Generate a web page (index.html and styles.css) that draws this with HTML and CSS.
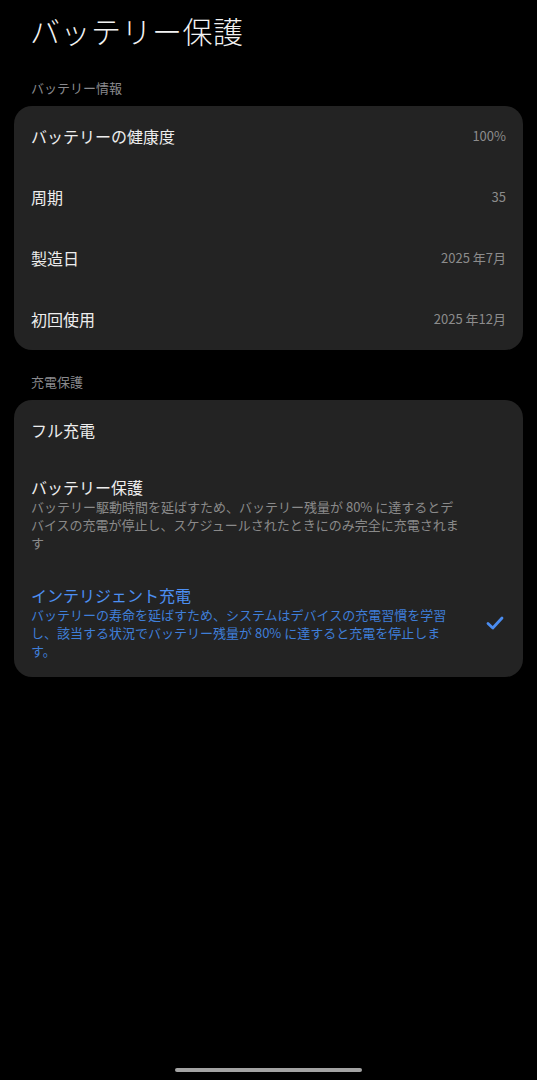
FILE: index.html
```html
<!DOCTYPE html>
<html lang="ja">
<head>
<meta charset="utf-8">
<title>バッテリー保護</title>
<link rel="stylesheet" href="styles.css">
</head>
<body>
<div class="screen">
  <h1 class="title">バッテリー保護</h1>

  <div class="section-label">バッテリー情報</div>
  <div class="card">
    <div class="row"><span class="row-label">バッテリーの健康度</span><span class="row-value">100%</span></div>
    <div class="row"><span class="row-label">周期</span><span class="row-value">35</span></div>
    <div class="row"><span class="row-label">製造日</span><span class="row-value">2025 年7月</span></div>
    <div class="row"><span class="row-label">初回使用</span><span class="row-value">2025 年12月</span></div>
  </div>

  <div class="section-label second">充電保護</div>
  <div class="card">
    <div class="row"><span class="row-label">フル充電</span></div>
    <div class="option">
      <div class="option-text wide">
        <div class="option-title">バッテリー保護</div>
        <div class="option-desc">バッテリー駆動時間を延ばすため、バッテリー残量が 80% に達するとデバイスの充電が停止し、スケジュールされたときにのみ完全に充電されます</div>
      </div>
    </div>
    <div class="option selected">
      <div class="option-text narrow">
        <div class="option-title">インテリジェント充電</div>
        <div class="option-desc">バッテリーの寿命を延ばすため、システムはデバイスの充電習慣を学習し、該当する状況でバッテリー残量が 80% に達すると充電を停止します。</div>
      </div>
      <svg class="check" width="18" height="16" viewBox="0 0 18 16" aria-hidden="true">
        <path d="M2 8.5 L6.8 13 L16 3" fill="none" stroke="#4a8cf0" stroke-width="2.8" stroke-linecap="round" stroke-linejoin="round"/>
      </svg>
    </div>
  </div>

  <div class="spacer"></div>
  <div class="home-indicator"></div>
</div>
</body>
</html>
```
FILE: styles.css
```css
* { box-sizing: border-box; }
html, body {
  margin: 0;
  padding: 0;
  background: #000;
}
body {
  font-family: "Noto Sans CJK JP", "Noto Sans", sans-serif;
  color: #ececec;
}
.screen {
  width: 537px;
  height: 1080px;
  display: flex;
  flex-direction: column;
  padding: 0 14px;
}
.title {
  margin: 0;
  padding: 10px 0 0 16px;
  height: 74px;
  font-size: 30px;
  font-weight: 300;
  line-height: 40px;
  color: #f2f2f2;
  letter-spacing: 0.5px;
}
.section-label {
  font-size: 13px;
  line-height: 18px;
  color: #8a8a8e;
  padding-left: 17px;
  height: 32px;
  padding-top: 5px;
}
.section-label.second {
  margin-top: 17px;
  height: 33px;
  padding-top: 6px;
}
.card {
  background: #232323;
  border-radius: 18px;
  display: flex;
  flex-direction: column;
}
.row {
  height: 61px;
  display: flex;
  align-items: center;
  justify-content: space-between;
  padding: 0 17px 2px;
}
.row-label {
  font-size: 16px;
  color: #ededed;
}
.row-value {
  font-size: 13px;
  color: #8c8c8c;
}
.option {
  display: flex;
  align-items: center;
  justify-content: space-between;
  padding: 16px 17px 17px;
}
.option-text.wide { width: 432px; }
.option-text.narrow { width: 420px; }
.option-title {
  font-size: 16px;
  line-height: 21px;
  color: #ededed;
}
.option-desc {
  font-size: 13px;
  line-height: 18px;
  color: #8a8a8a;
}
.option.selected .option-title { color: #4d8ff2; }
.option.selected .option-desc { color: #3f7ed8; }
.check {
  display: block;
  margin-right: 2px;
}
.spacer { flex: 1; }
.home-indicator {
  align-self: center;
  width: 187px;
  height: 4px;
  border-radius: 2px;
  background: #a3a3a3;
  margin-bottom: 8px;
}
```
